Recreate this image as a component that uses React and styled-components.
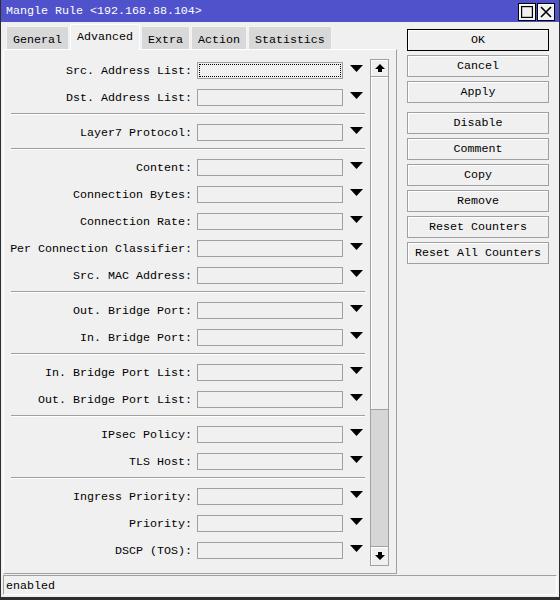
import React from 'react';
import styled, { createGlobalStyle } from 'styled-components';

const GlobalStyle = createGlobalStyle`
  html, body {
    margin: 0;
    padding: 0;
    background: #f0f0f0;
  }
  body {
    font-family: "Liberation Mono", "DejaVu Sans Mono", monospace;
    font-size: 11.67px;
    color: #000;
  }
`;

const Window = styled.div`
  width: 560px;
  height: 600px;
  box-sizing: border-box;
  display: flex;
  flex-direction: column;
  background: #f0f0f0;
  border: 1px solid #2e2e2e;
  border-top: none;
  border-bottom-width: 3px;
`;

const TitleBar = styled.div`
  height: 22px;
  flex: none;
  display: flex;
  align-items: center;
  padding: 0 4px 0 5px;
  background: #4f52cb;
  color: #fff;
  white-space: nowrap;
`;

const Controls = styled.div`
  margin-left: auto;
  display: flex;
  gap: 1px;
  padding-top: 1px;
`;

const WinButton = styled.div`
  width: 18px;
  height: 18px;
  box-sizing: border-box;
  border: 1px solid #000;
  background: #f0f0f0;
  box-shadow: inset 1px 1px #fff;
  display: flex;
  align-items: center;
  justify-content: center;
`;

const Body = styled.div`
  flex: 1;
  min-height: 0;
  display: flex;
  padding-left: 2px;
`;

const LeftPane = styled.div`
  width: 394px;
  display: flex;
  flex-direction: column;
  padding-bottom: 1px;
`;

const Tabs = styled.div`
  height: 27px;
  flex: none;
  display: flex;
  align-items: flex-end;
  gap: 1px;
  padding-left: 3px;
`;

const Tab = styled.div`
  box-sizing: border-box;
  height: ${p => (p.$active ? '26px' : '23px')};
  margin-bottom: ${p => (p.$active ? '-1px' : '0')};
  padding: ${p => (p.$active ? '5px' : '6px')} 6px 0;
  line-height: 14px;
  background: ${p => (p.$active ? '#f0f0f0' : '#d8d8d8')};
  border: 1px solid ${p => (p.$active ? '#ffffff' : '#f4f4f4')};
  border-bottom: none;
  position: relative;
  z-index: ${p => (p.$active ? 1 : 0)};
  white-space: nowrap;
`;

const Panel = styled.div`
  flex: 1;
  min-height: 0;
  display: flex;
  border: 1px solid;
  border-color: #fff #a0a0a0 #a0a0a0 #fff;
  overflow: hidden;
`;

const Form = styled.div`
  flex: 1;
  min-width: 0;
  padding-top: 7px;
  overflow: hidden;
`;

const Row = styled.div`
  height: 27px;
  display: flex;
  align-items: center;
`;

const Label = styled.div`
  width: 188px;
  flex: none;
  text-align: right;
  white-space: nowrap;
`;

const Field = styled.div`
  width: 146px;
  height: 17px;
  flex: none;
  box-sizing: border-box;
  margin-left: 5px;
  border: 1px solid #a0a0a0;
  background: #f0f0f0;
  outline: ${p => (p.$focused ? '1px dotted #000' : 'none')};
  outline-offset: -3px;
`;

const DropArrow = styled.svg`
  margin-left: 7px;
  margin-top: -4px;
  flex: none;
`;

const Separator = styled.div`
  height: 1px;
  margin: 2px 5px 5px 7px;
  background: #a0a0a0;
  box-shadow: 0 1px #fff;
`;

const ScrollBar = styled.div`
  width: 19px;
  flex: none;
  box-sizing: border-box;
  margin: 9px 7px 7px 0;
  display: flex;
  flex-direction: column;
  border: 1px solid #a0a0a0;
`;

const ScrollButton = styled.div`
  height: ${p => p.$h}px;
  flex: none;
  display: flex;
  align-items: center;
  justify-content: center;
  background: #f0f0f0;
  box-shadow: inset 1px 1px #fff;
  border-top: ${p => (p.$down ? '1px solid #a0a0a0' : 'none')};
  border-bottom: ${p => (p.$down ? 'none' : '1px solid #a0a0a0')};
`;

const Thumb = styled.div`
  height: 332px;
  flex: none;
  background: #f0f0f0;
  box-shadow: inset 1px 1px #fff;
  border-bottom: 1px solid #a0a0a0;
`;

const Track = styled.div`
  flex: 1;
  background: #d6d6d6;
`;

const Buttons = styled.div`
  width: 142px;
  margin-left: 10px;
  padding-top: 7px;
  display: flex;
  flex-direction: column;
  gap: 4px;
`;

const Button = styled.div`
  height: 22px;
  box-sizing: border-box;
  margin-top: ${p => p.$gapTop || 0}px;
  border: 1px solid ${p => (p.$primary ? '#000' : '#a0a0a0')};
  box-shadow: inset 1px 1px #fff;
  display: flex;
  align-items: center;
  justify-content: center;
  white-space: nowrap;
`;

const StatusBar = styled.div`
  height: 20px;
  flex: none;
  box-sizing: border-box;
  margin: 0 2px 2px;
  padding: 1px 0 0 2px;
  line-height: 18px;
  border: 1px solid;
  border-color: #a0a0a0 #fff #fff #a0a0a0;
`;

const groups = [
  ['Src. Address List', 'Dst. Address List'],
  ['Layer7 Protocol'],
  ['Content', 'Connection Bytes', 'Connection Rate', 'Per Connection Classifier', 'Src. MAC Address'],
  ['Out. Bridge Port', 'In. Bridge Port'],
  ['In. Bridge Port List', 'Out. Bridge Port List'],
  ['IPsec Policy', 'TLS Host'],
  ['Ingress Priority', 'Priority', 'DSCP (TOS)'],
];

const tabs = ['General', 'Advanced', 'Extra', 'Action', 'Statistics'];

const Arrow = () => (
  <DropArrow width="13" height="7" viewBox="0 0 13 7">
    <polygon points="0,0 13,0 6.5,7" fill="#000" />
  </DropArrow>
);

const App = () => (
  <>
    <GlobalStyle />
    <Window>
      <TitleBar>
        Mangle Rule &lt;192.168.88.104&gt;
        <Controls>
          <WinButton>
            <svg width="12" height="12" viewBox="0 0 12 12">
              <rect x="0.5" y="0.5" width="11" height="11" fill="none" stroke="#000" strokeWidth="1.4" />
            </svg>
          </WinButton>
          <WinButton>
            <svg width="12" height="12" viewBox="0 0 12 12">
              <path d="M1 1 L11 11 M11 1 L1 11" stroke="#000" strokeWidth="1.6" />
            </svg>
          </WinButton>
        </Controls>
      </TitleBar>
      <Body>
        <LeftPane>
          <Tabs>
            {tabs.map(t => (
              <Tab key={t} $active={t === 'Advanced'}>{t}</Tab>
            ))}
          </Tabs>
          <Panel>
            <Form>
              {groups.map((g, gi) => (
                <React.Fragment key={gi}>
                  {gi > 0 && <Separator />}
                  {g.map((name, i) => (
                    <Row key={name}>
                      <Label>{name}:</Label>
                      <Field $focused={gi === 0 && i === 0} />
                      <Arrow />
                    </Row>
                  ))}
                </React.Fragment>
              ))}
            </Form>
            <ScrollBar>
              <ScrollButton $h={16}>
                <svg width="10" height="8" viewBox="0 0 10 8">
                  <polygon points="5,0 10,5 7,5 7,8 3,8 3,5 0,5" fill="#000" />
                </svg>
              </ScrollButton>
              <Thumb />
              <Track />
              <ScrollButton $h={18} $down>
                <svg width="10" height="8" viewBox="0 0 10 8">
                  <polygon points="3,0 7,0 7,3 10,3 5,8 0,3 3,3" fill="#000" />
                </svg>
              </ScrollButton>
            </ScrollBar>
          </Panel>
        </LeftPane>
        <Buttons>
          <Button $primary>OK</Button>
          <Button>Cancel</Button>
          <Button>Apply</Button>
          <Button $gapTop={5}>Disable</Button>
          <Button>Comment</Button>
          <Button>Copy</Button>
          <Button>Remove</Button>
          <Button>Reset Counters</Button>
          <Button>Reset All Counters</Button>
        </Buttons>
      </Body>
      <StatusBar>enabled</StatusBar>
    </Window>
  </>
);

export default App;
